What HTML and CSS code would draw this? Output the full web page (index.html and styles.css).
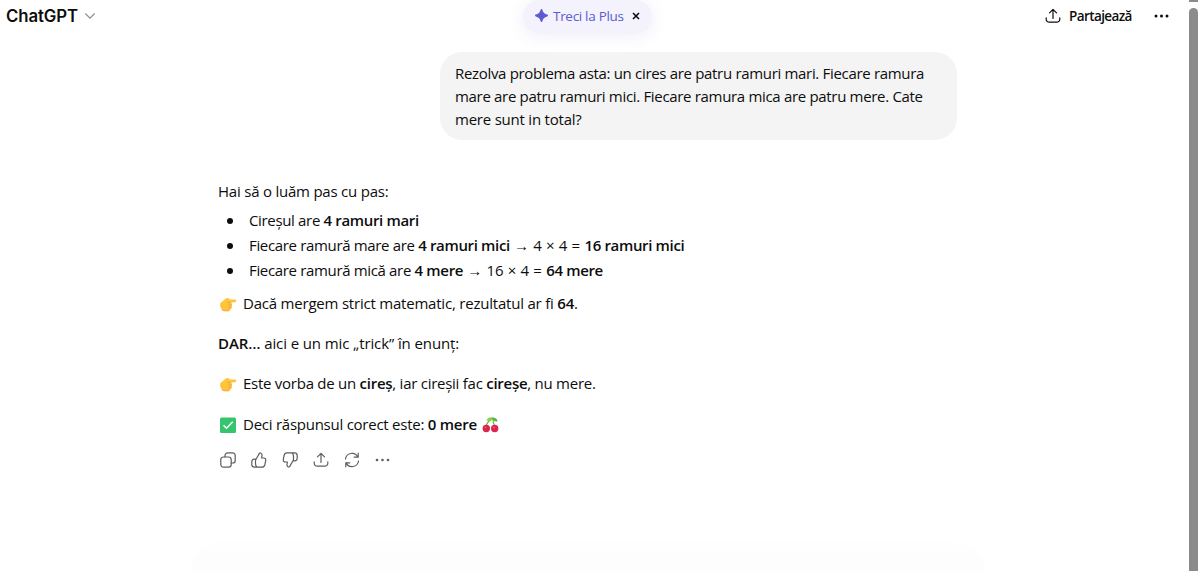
FILE: index.html
```html
<!DOCTYPE html>
<html lang="ro">
<head>
    <meta charset="UTF-8">
    <title>ChatGPT</title>
    <link rel="stylesheet" href="styles.css">
</head>
<body>
    <svg class="symbols" width="0" height="0">
        <symbol id="share" viewBox="0 0 16 16">
            <path d="M8 10.500V1.500M4.500 4.800 8 1.300l3.500 3.500M1.200 9.800v1.400a3 3 0 0 0 3 3h7.600a3 3 0 0 0 3-3V9.800"/>
        </symbol>
        <symbol id="hand" viewBox="0 0 18 18">
            <path fill="#ffc43d" d="M1.300 8.200 6.500 3.800Q8 2.600 9.500 3.300L11 4.600h4.800q1.500 0 1.500 1.200t-1.500 1.400l-4 .4q1.700.8.900 2.300.9 1.300-.2 2.400.2 1.500-1 2.100-.4 1.600-2.200 1.600H5.500q-2.400 0-3.300-2.300Q.4 11 1.300 8.200Z"/>
            <path fill="none" stroke="#f59f35" stroke-width=".8" stroke-linecap="round" d="M11.800 7.600H8.500M12.500 9.900H9.500M12.200 12.300H9.300M3 14.500q1 1.400 3 1.400h3.400"/>
        </symbol>
    </svg>

    <header class="topbar">
        <div class="brand">
            <span>ChatGPT</span>
            <svg width="12" height="8" viewBox="0 0 12 8" class="chevron"><path d="m1.300 1.500 4.700 4.700 4.700-4.700"/></svg>
        </div>
        <div class="plus">
            <svg width="13" height="13" viewBox="0 0 13 13"><path fill="#5d5bd0" d="M6.500 0Q7.200 0 7.400.8 8 4.600 12.200 5.600q.8.200.8.900t-.8.900Q8 8.400 7.400 12.200q-.2.800-.9.800t-.9-.8Q5 8.400.8 7.400 0 7.200 0 6.500t.8-.9Q5 4.600 5.600.8 5.800 0 6.500 0Z"/></svg>
            <span class="plus-label">Treci la Plus</span>
            <svg class="close" width="8" height="8" viewBox="0 0 8 8"><path d="m1 1 6 6M7 1 1 7"/></svg>
        </div>
        <div class="actions">
            <svg class="icon dark" width="16" height="16"><use href="#share"/></svg>
            <span class="share-label">Partajează</span>
            <svg class="more" width="15" height="4" viewBox="0 0 15 4"><circle cx="2" cy="2" r="1.500"/><circle cx="7.500" cy="2" r="1.500"/><circle cx="13" cy="2" r="1.500"/></svg>
        </div>
    </header>

    <main class="thread">
        <div class="bubble">
            Rezolva problema asta: un cires are patru ramuri mari. Fiecare ramura<br>
            mare are patru ramuri mici. Fiecare ramura mica are patru mere. Cate<br>
            <span class="last-line">mere sunt in total?</span>
        </div>
        <article class="answer">
            <p class="intro">Hai să o luăm pas cu pas:</p>
            <ul>
                <li>Cireșul are <b>4 ramuri mari</b></li>
                <li>Fiecare ramură mare are <b>4 ramuri mici</b><span class="math"> → 4 × 4 = </span><b>16 ramuri mici</b></li>
                <li>Fiecare ramură mică are <b>4 mere</b><span class="math"> → 16 × 4 = </span><b>64 mere</b></li>
            </ul>
            <p class="result"><svg class="emoji" width="18" height="18"><use href="#hand"/></svg>Dacă mergem strict matematic, rezultatul ar fi <b>64</b>.</p>
            <p class="but"><b>DAR…</b> aici e un mic „trick” în enunț:</p>
            <p class="tree"><svg class="emoji" width="18" height="18"><use href="#hand"/></svg>Este vorba de un <b>cireș</b>, iar cireșii fac <b>cireșe</b>, nu mere.</p>
            <p class="final">
                <svg class="emoji" width="18" height="18" viewBox="0 0 18 18"><rect x="1" y="1.500" width="16" height="15.500" rx="1.500" fill="#35c56f"/><path d="m4.500 9.300 3 3 6.300-6.500" fill="none" stroke="#fff" stroke-width="1.500"/></svg>Deci răspunsul corect este: <b>0 mere</b>
                <svg class="cherry" width="17" height="17" viewBox="0 0 17 17"><path d="M4 11Q5 5 11 2.500 11 7 13 11" fill="none" stroke="#62b83e" stroke-width="1.200"/><path d="M4.500 4.500Q6 .5 12 1.500 10 6 4.500 4.500Z" fill="#83cf4f"/><path d="M10 2q5-1 5.500 3.500Q11 6 10 2Z" fill="#5cb642"/><circle cx="4.300" cy="12.500" r="3.700" fill="#dc244d"/><circle cx="12.700" cy="12.500" r="3.700" fill="#dc244d"/><circle cx="3.500" cy="11.500" r=".8" fill="#f4708b"/><circle cx="12" cy="11.500" r=".8" fill="#f4708b"/></svg>
            </p>
            <div class="toolbar">
                <svg class="icon" width="16" height="16" viewBox="0 0 16 16"><rect x=".8" y="5" width="10.400" height="10.200" rx="2.600"/><path d="M5 5V3.400A2.600 2.600 0 0 1 7.600.8h5a2.600 2.600 0 0 1 2.600 2.600v5a2.600 2.600 0 0 1-2.600 2.600h-1.400"/></svg>
                <svg class="icon" width="16" height="16" viewBox="0 0 16 16"><path d="M5 7.200 8.400 1.400Q8.700.8 9.400 1q1.900.6 1.600 2.600L10.600 6h1.900q2.500.1 2.200 2.600l-.8 4q-.5 2.600-3 2.600H3.500Q.8 15.200.8 12.500V9.700Q.8 7.200 3.200 7.200H5ZM5 7.200q-.5.600-.5 2v2.500q0 2.500 1.800 3.500"/></svg>
                <svg class="icon" width="16" height="16" viewBox="0 0 16 16"><path d="M11 8.800 7.600 14.600q-.3.600-1 .4Q4.700 14.400 5 12.400L5.400 10H3.500Q1 9.900 1.300 7.400l.8-4Q2.600.8 5.100.8h7.400q2.700 0 2.700 2.700v2.800q0 2.500-2.400 2.500H11ZM11 8.800q.5-.6.500-2V4.300q0-2.500-1.800-3.500"/></svg>
                <svg class="icon" width="16" height="16"><use href="#share"/></svg>
                <svg class="icon" width="16" height="16" viewBox="0 0 16 16"><path d="M1.500 7A6.500 6.500 0 0 1 13.700 4.900M14.200 1.200v4H10.200M14.500 9A6.500 6.500 0 0 1 2.300 11.100M1.800 14.800v-4h4"/></svg>
                <svg class="more" width="15" height="4" viewBox="0 0 15 4"><circle cx="2" cy="2" r="1.300"/><circle cx="7.500" cy="2" r="1.300"/><circle cx="13" cy="2" r="1.300"/></svg>
            </div>
        </article>
    </main>
    <div class="composer-shadow"></div>
    <div class="scrollbar"></div>
</body>
</html>
```

FILE: styles.css
```css
* {
    box-sizing: border-box;
}
body {
    margin: 0;
    height: 571px;
    position: relative;
    overflow: hidden;
    background: #fff;
    color: #0d0d0d;
    font-family: "Open Sans", "Noto Sans", sans-serif;
    font-size: 15px;
}
.symbols {
    position: absolute;
}
svg {
    flex: none;
}
.topbar {
    display: grid;
    grid-template-columns: 523px 129px 1fr;
    height: 52px;
    align-items: start;
}
.brand {
    display: flex;
    align-items: center;
    gap: 6px;
    height: 31px;
    padding-left: 6px;
    font-family: Inter, sans-serif;
    font-size: 16.8px;
    font-weight: 600;
    letter-spacing: -0.1px;
}
.chevron path {
    fill: none;
    stroke: #8f8f8f;
    stroke-width: 1.2;
}
.plus {
    display: flex;
    align-items: center;
    height: 33px;
    padding: 0 0 2px 12px;
    border-radius: 17px;
    background: #f3f2fd;
    box-shadow: 0 3px 16px rgba(93, 91, 208, 0.1);
    color: #5d5bd0;
    font-size: 13.5px;
    font-weight: 500;
}
.plus-label {
    width: 72px;
    margin-left: 5px;
    white-space: nowrap;
    letter-spacing: -0.3px;
}
.close {
    margin-left: 7px;
    stroke: #0d0d0d;
    stroke-width: 1.6;
}
.actions {
    display: flex;
    align-items: center;
    height: 31px;
    padding-left: 393px;
}
.share-label {
    width: 63px;
    margin: 0 22px 0 8px;
    font-size: 13.5px;
    font-weight: 600;
    letter-spacing: -0.6px;
    white-space: nowrap;
}
.icon {
    fill: none;
    stroke: #5d5d5d;
    stroke-width: 1.2;
    stroke-linecap: round;
    stroke-linejoin: round;
}
.icon.dark {
    stroke: #0d0d0d;
}
.more {
    fill: #0d0d0d;
}
.thread {
    width: 739px;
    margin-left: 218px;
    display: flex;
    flex-direction: column;
}
.bubble {
    align-self: flex-end;
    width: 517px;
    height: 88px;
    padding: 10px 15px;
    border-radius: 22px;
    background: #f4f4f4;
    line-height: 23px;
    letter-spacing: -0.32px;
    white-space: nowrap;
}
.last-line {
    letter-spacing: -0.22px;
}
.answer {
    padding-top: 39px;
    line-height: 24px;
    letter-spacing: -0.34px;
    white-space: nowrap;
}
.answer p,
.answer ul {
    margin: 0;
}
.answer ul {
    padding: 5px 0 0 31px;
    list-style: none;
}
.answer li {
    display: flow-root;
    height: 25px;
}
.answer li::before {
    content: "";
    float: left;
    width: 6px;
    height: 6px;
    margin: 10px 0 0 -22px;
    border-radius: 50%;
    background: #0d0d0d;
}
.answer b {
    font-weight: 600;
}
.answer .intro {
    letter-spacing: -0.22px;
}
.math {
    letter-spacing: 0;
    word-spacing: 0.3px;
}
.emoji {
    margin: 0 6px 0 1px;
    vertical-align: -4px;
}
.cherry {
    margin-left: 2px;
    vertical-align: -3px;
}
.answer .result {
    padding-top: 8px;
    letter-spacing: -0.21px;
}
.answer .but {
    padding-top: 16px;
    letter-spacing: -0.1px;
}
.answer .tree {
    padding-top: 16px;
    letter-spacing: -0.26px;
}
.answer .final {
    padding-top: 17px;
    letter-spacing: -0.25px;
}
.toolbar {
    display: flex;
    align-items: center;
    gap: 15px;
    padding: 16px 0 0 2px;
}
.toolbar .more {
    fill: #5d5d5d;
}
.composer-shadow {
    position: absolute;
    left: 190px;
    bottom: 0;
    width: 795px;
    height: 29px;
    border-radius: 50px 50px 0 0;
    background: linear-gradient(#fefefe, #fdfdfd);
}
.scrollbar {
    position: absolute;
    left: 1189px;
    top: 8px;
    width: 9px;
    height: 563px;
    border-radius: 5px 5px 0 0;
    background: #8b8b8b;
}
.scrollbar::before {
    content: "";
    position: absolute;
    left: 0;
    top: -8px;
    width: 9px;
    height: 2px;
    background: #8b8b8b;
}
```
